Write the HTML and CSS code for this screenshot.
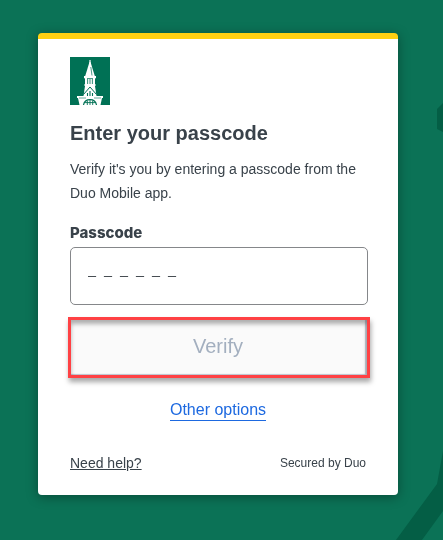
FILE: index.html
```html
<!doctype html>
<html lang="en">
<head>
  <meta charset="utf-8">
  <meta name="viewport" content="width=device-width, initial-scale=1">
  <title>Enter your passcode</title>
  <link rel="stylesheet" href="styles.css">
</head>

<body>
  <svg class="backdrop" viewBox="0 0 443 540" preserveAspectRatio="xMaxYMin slice" aria-hidden="true">
    <path d="M443 103 L437 109 V129 L443 132 Z"/>
    <path d="M443 451 L437 484 L396 540 H422 L443 511 Z"/>
  </svg>

  <main class="card">
    <svg class="logo" viewBox="0 0 40 48" role="img" aria-label="University logo">
      <rect width="40" height="48" fill="#007155"/>
      <g fill="#fff">
        <rect x="19.4" y="3" width="1.2" height="5"/>
        <path d="M19.5 5 H20.5 L24.8 19 H15.2 Z"/>
        <rect x="14" y="19" width="12" height="2.3"/>
        <rect x="15" y="21" width="2" height="7"/>
        <rect x="17.7" y="22" width="1.2" height="6"/>
        <rect x="19.4" y="22" width="1.2" height="6"/>
        <rect x="21.1" y="22" width="1.2" height="6"/>
        <rect x="23" y="21" width="2" height="7"/>
        <rect x="14.5" y="27" width="11" height="2"/>
        <path d="M15 29 H25 L26.5 39 H13.5 Z"/>
        <path d="M7 39 H33 V41 H32 L30.5 48 H9.5 L8 41 H7 Z"/>
      </g>
      <g fill="none" stroke="#007155">
        <path d="M20.8 10 L22 18.5" stroke-width=".7"/>
        <path d="M13.5 37.5 L20 30 L26.5 37.5" stroke-width="1"/>
        <path d="M17.5 39 V36 M20 39 V34 M22.5 39 V36" stroke-width="1.1"/>
        <path d="M9 41 H16 M24 41 H31" stroke-width=".6"/>
        <path d="M13.5 48 C14 45 16 42.6 20 42.6 C24 42.6 26 45 26.5 48" stroke-width="1.2"/>
        <path d="M17.3 43.5 V48 M20 42.6 V48 M22.7 43.5 V48 M14.5 45.6 H25.5" stroke-width=".9"/>
      </g>
    </svg>

    <h1>Enter your passcode</h1>
    <p class="intro">Verify it's you by entering a passcode from the Duo Mobile app.</p>

    <form>
      <label for="passcode">Passcode</label>
      <input class="passcode" type="text" id="passcode" name="passcode" inputmode="numeric" placeholder="–&nbsp;&nbsp;–&nbsp;&nbsp;–&nbsp;&nbsp;–&nbsp;&nbsp;–&nbsp;&nbsp;–">
      <button class="verify" type="submit" disabled>Verify</button>
    </form>

    <div class="options">
      <a href="#options">Other options</a>
    </div>

    <footer>
      <a href="#help">Need help?</a>
      <span class="secured">Secured by Duo</span>
    </footer>
  </main>
</body>
</html>
```

FILE: styles.css
```css
* {
  box-sizing: border-box;
}
body {
  margin: 0;
  min-height: 100vh;
  padding: 33px 45px 45px 38px;
  background: #0b7256;
  color: #39424a;
  font-family: "Liberation Sans", Arial, sans-serif;
  font-size: 14px;
  line-height: 24px;
}
.backdrop {
  position: fixed;
  top: 0;
  right: 0;
  width: 100%;
  height: 100%;
  z-index: -1;
  fill: #045e45;
}
.card {
  max-width: 480px;
  margin: 0 auto;
  padding: 18px 32px 20px 32px;
  border-top: 6px solid #ffd012;
  border-radius: 4px;
  background: #fff;
  box-shadow: 0 2px 12px rgba(0, 0, 0, 0.35);
}
.logo {
  display: block;
  width: 40px;
  height: 48px;
}
h1 {
  margin: 16px 0 12px;
  font-size: 20px;
  line-height: 24px;
}
.intro {
  margin: 0 0 16px;
}
form {
  margin-right: -2px;
}
label {
  display: block;
  margin-bottom: 2px;
  font-family: Inter, "Liberation Sans", sans-serif;
  font-size: 15px;
  font-weight: 800;
}
.passcode {
  display: block;
  width: 100%;
  height: 58px;
  padding: 0 17px 2px;
  border: 1px solid #85878a;
  border-radius: 5px;
  background: #fff;
  color: #1f272e;
  font-family: "Liberation Serif", serif;
  font-size: 16px;
}
.passcode::placeholder {
  color: #1f272e;
  opacity: 1;
}
.verify {
  display: block;
  width: calc(100% + 4px);
  height: 61px;
  margin: 12px -2px 20px;
  padding: 0 2px 2px 0;
  border: 3px solid #ff4144;
  background: #fafafa;
  box-shadow: 1px 4px 5px rgba(0, 0, 0, 0.35), inset 0 4px 4px rgba(0, 0, 0, 0.3), inset -2px -1px 1px #bcc3cc;
  color: #a3afbf;
  font-family: inherit;
  font-size: 20px;
}
.options {
  text-align: center;
}
.options a {
  display: inline-block;
  border-bottom: 1px solid #1d69e0;
  color: #1d69e0;
  font-size: 16px;
  line-height: 20px;
  text-decoration: none;
}
footer {
  display: flex;
  justify-content: space-between;
  align-items: center;
  margin-top: 29px;
}
footer a {
  color: inherit;
}
.secured {
  font-size: 12px;
}
```
